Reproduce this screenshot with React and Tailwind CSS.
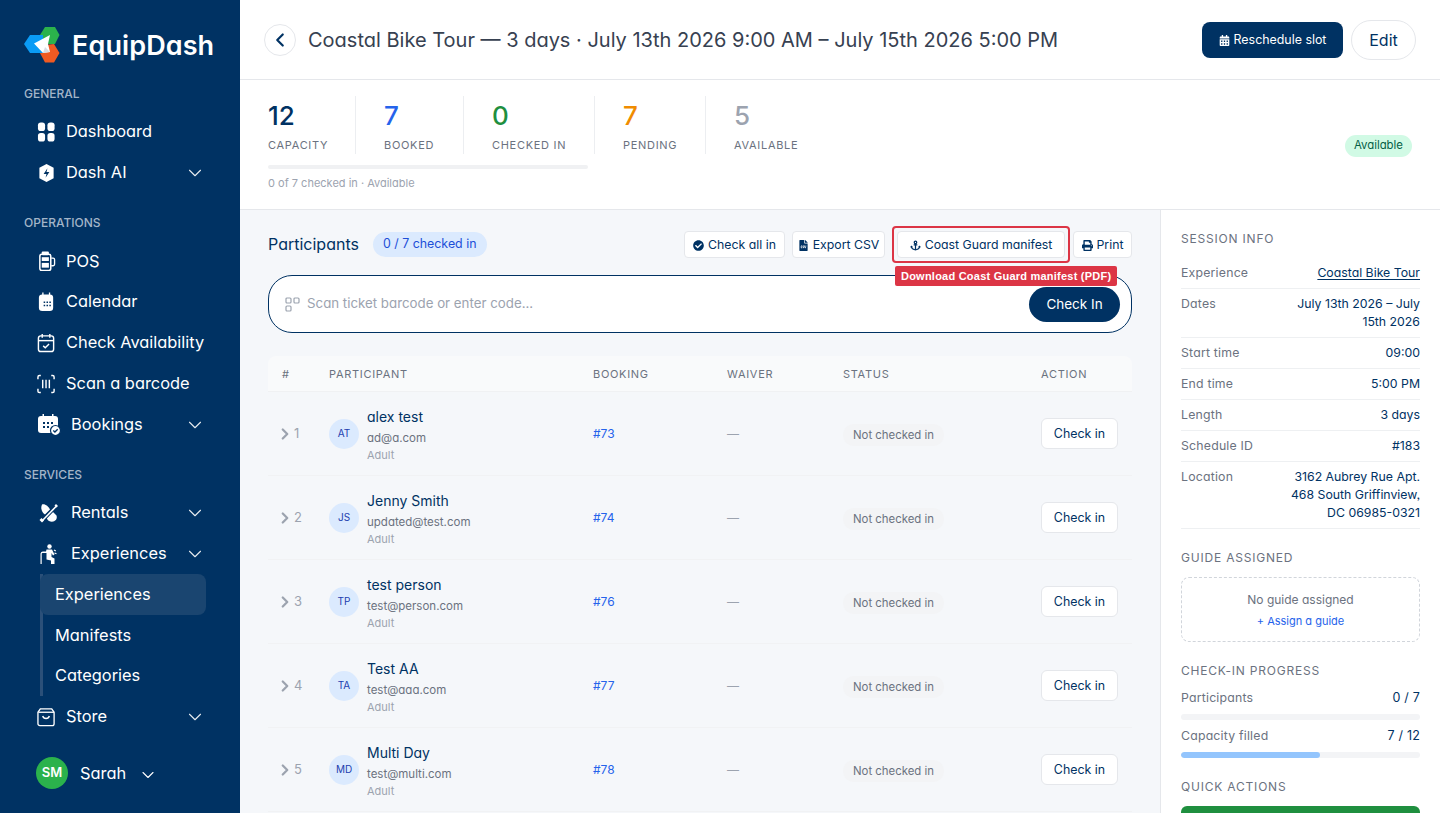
import React from "react";
import { ChevronDown, ChevronRight, ChevronLeft } from "lucide-react";
import { FaCheckCircle, FaFileCsv, FaAnchor, FaPrint, FaCalendarAlt } from "react-icons/fa";

const F = "[font-family:Inter,'Liberation_Sans',sans-serif] [font-feature-settings:'cv11','ss03']";

function Logo() {
  return (
    <svg width="38" height="36" viewBox="0 0 38 36">
      <path d="M16 8 L21 0 L31 0 L35.500 8 L31 17 L21 17 Z" fill="#2bb24c" />
      <path d="M16 26 L21 18 L30 17 L35.500 26 L30 35.500 L21 35.500 Z" fill="#f05a22" />
      <path d="M0 17 L6 8 L19 8 L19 26 L6 26 Z" fill="#0a9bf5" />
      <path d="M10 16.500 L26 8 L24 17 L26 25 L19 26 Z" fill="#fff" />
      <path d="M21 20 L26 25 L19 26 Z" fill="#d7dde3" />
    </svg>
  );
}
const I = ({ children, w = 20, h = 20 }) => (
  <svg width={w} height={h} viewBox="0 0 20 20" fill="white">{children}</svg>
);
const icons = {
  dashboard: <I><rect x="1" y="0" width="7.5" height="9" rx="3" /><rect x="11" y="0" width="7.5" height="9" rx="3" /><rect x="1" y="11" width="7.5" height="9" rx="3" /><rect x="11" y="11" width="7.5" height="9" rx="3" /></I>,
  ai: <I><path d="M10 0.5 L17.5 4.5 V15.5 L10 19.5 L2.5 15.5 V4.500 Z" /><path d="M11 5 L7 11 H10 L9 15 L13 9 H10 Z" fill="#003263" /></I>,
  pos: <I><rect x="3" y="3" width="11.500" height="17" rx="2" fill="none" stroke="white" strokeWidth="1.6" /><rect x="5" y="0" width="7.500" height="4" rx="1" /><rect x="5" y="6" width="7.500" height="4" /><rect x="5" y="12" width="7.500" height="5" /><path d="M15 7 h2 a1.5 1.5 0 0 1 1.5 1.5 v5 a1.5 1.5 0 0 1 -1.5 1.5 h-2" fill="none" stroke="white" strokeWidth="1.4" /></I>,
  calendar: <I><rect x="2" y="2" width="15" height="17.5" rx="3.5" /><rect x="5.5" y="0" width="1.4" height="4" /><rect x="12.5" y="0" width="1.4" height="4" /><path d="M7 9.5h1.6v1.6H7zM10 9.5h1.6v1.6H10zM13 9.5h1.6v1.6H13zM7 13h1.6v1.6H7zM10 13h1.6v1.6H10zM13 13h1.6v1.6H13z" fill="#003263" /></I>,
  check: <I><rect x="1.5" y="2.5" width="16" height="16.5" rx="2.5" fill="none" stroke="white" strokeWidth="1.5" /><path d="M1.5 7.5h16" stroke="white" strokeWidth="1.5" /><path d="M5.5 0.5v4M13.5 0.5v4" stroke="white" strokeWidth="1.5" /><path d="M6.5 13l2.2 2 4-4" fill="none" stroke="white" strokeWidth="1.5" /></I>,
  scan: <I><path d="M1 5V2.500A1.500 1.500 0 0 1 2.500 1H4M15 1h1.500A1.500 1.500 0 0 1 18 2.500V5M1 15v2.500A1.500 1.500 0 0 0 2.500 19H4M15 19h1.500a1.500 1.500 0 0 0 1.500-1.500V15M6 5.500v9M9.500 5.500v9M13 5.500v9" fill="none" stroke="white" strokeWidth="1.5" /></I>,
  bookings: (
    <svg width="24" height="22" viewBox="0 0 24 22" fill="white">
      <rect x="1" y="2" width="20" height="17" rx="3" />
      <rect x="5.5" y="0" width="1.5" height="4" /><rect x="15" y="0" width="1.5" height="4" />
      <path d="M6 8h2v2H6zM10 8h2v2h-2zM14 8h2v2h-2zM6 12h2v2H6zM10 12h2v2h-2z" fill="#003263" />
      <circle cx="18.5" cy="16.5" r="5" stroke="#003263" strokeWidth="1.2" />
      <path d="M16.3 16.5l1.6 1.5 2.8-2.800" fill="none" stroke="#003263" strokeWidth="1.3" />
    </svg>
  ),
  rentals: <I><path d="M3 1.500 C6 0.500 9.500 3.500 11 6.500 L6 11.500 C3.500 10 1 6 3 1.500 Z" /><path d="M12.500 7.500 L17.500 12.500 C19 17 14.500 20 10 18 C8.500 17 7.500 15.500 7 13 Z" /><path d="M3 18 L17.500 3" stroke="#003263" strokeWidth="3.500" /><path d="M3 18 L17.500 3" stroke="white" strokeWidth="1.600" /><path d="M15.500 2.500 L17 1 L19 3 L17.500 4.500 Z" /><path d="M0.500 17 L2.500 15 L5 17.500 L3 19.500 Z" /></I>,
  exp: <I><circle cx="10.500" cy="2.500" r="2.200" /><path d="M7.500 5.500h5.500l2.500 5-1.500 1-1.500-2.500V13l3 1.500V20h-3.500v-3.500l-4.500-1V9H3.500a1 1 0 0 0-.8 1V20H1.500V9.500A2.500 2.500 0 0 1 4 7.500h3z" /><path d="M15 6l1.800 1M15.500 9l2 .8" stroke="white" strokeWidth="1.200" /></I>,
  store: <I><path d="M3.500 1.500h12l2.500 3.500V17a2 2 0 0 1-2 2H3a2 2 0 0 1-2-2V5z" fill="none" stroke="white" strokeWidth="1.400" /><path d="M1.500 5h16.500" stroke="white" strokeWidth="1.400" /><path d="M6 9c1 3.500 6 3.500 7 0" fill="none" stroke="white" strokeWidth="1.500" /></I>,
};

function NavItem({ icon, label, chev, h = "h-[41px]", gap = "gap-[10px]", iw = "w-[19px]" }) {
  return (
    <div className={`${h} flex items-center pl-[37px] pr-[34px] ${gap} text-[16.4px] font-normal text-white`}>
      <span className={`${iw} flex justify-center shrink-0`}>{icon}</span>
      <span className="flex-1 whitespace-nowrap">{label}</span>
      {chev && <ChevronDown size={22} strokeWidth={1.2} className="text-white/90" />}
    </div>
  );
}
const SecLabel = ({ children }) => (
  <div className="pl-[24px] text-[12px] font-medium text-[#a3b5c8] h-[20px] flex items-center">{children}</div>
);

function Sidebar() {
  return (
    <aside className="w-[240px] shrink-0 h-full bg-[#003263] flex flex-col">
      <div className="h-[84px] pl-[24px] pt-[27px] flex items-start gap-[10px]">
        <Logo />
        <span className="mt-[1px] text-[27px] leading-[36px] font-semibold text-white tracking-[0.1px]">EquipDash</span>
      </div>
      <SecLabel>GENERAL</SecLabel>
      <div className="h-[7px]" />
      <NavItem icon={icons.dashboard} label="Dashboard" />
      <NavItem icon={icons.ai} label="Dash AI" chev />
      <div className="h-[20px]" />
      <SecLabel>OPERATIONS</SecLabel>
      <div className="h-[8px]" />
      <NavItem icon={icons.pos} label="POS" h="h-[40px]" />
      <NavItem icon={icons.calendar} label="Calendar" />
      <NavItem icon={icons.check} label="Check Availability" />
      <NavItem icon={icons.scan} label="Scan a barcode" />
      <NavItem icon={icons.bookings} label="Bookings" chev iw="w-[24px]" />
      <div className="h-[20px]" />
      <SecLabel>SERVICES</SecLabel>
      <div className="h-[7px]" />
      <NavItem icon={icons.rentals} label="Rentals" chev iw="w-[24px]" />
      <NavItem icon={icons.exp} label="Experiences" chev iw="w-[24px]" />
      <div className="ml-[40px] w-[166px] flex flex-col border-l-[3px] border-[#2b5079]">
        <div className="h-[41px] -ml-[3px] pl-[15px] flex items-center bg-[#1a4570] rounded-[8px] text-white text-[16.4px]">Experiences</div>
        <div className="h-[41px] pl-[12px] flex items-center text-white text-[16.4px]">Manifests</div>
        <div className="h-[40px] pb-[2px] pl-[12px] flex items-center text-white text-[16.4px]">Categories</div>
      </div>
      <NavItem icon={icons.store} label="Store" chev />
      <div className="mt-[20px] pl-[36px] flex items-center gap-[12px] text-white text-[16.4px]">
        <span className="w-[32px] h-[32px] rounded-full bg-[#2bb24c] flex items-center justify-center text-[13px] font-semibold">SM</span>
        <span>Sarah</span>
        <ChevronDown size={20} strokeWidth={1.3} className="mt-[3px]" />
      </div>
    </aside>
  );
}

function Header() {
  return (
    <header className="h-[80px] shrink-0 bg-white border-b border-[#e5e7eb] flex items-center pl-[24px] pr-[24px]">
      <span className="w-[32px] h-[32px] rounded-full border border-[#e5e7eb] flex items-center justify-center text-[#003263]">
        <ChevronLeft size={22} strokeWidth={2.4} />
      </span>
      <h1 className="ml-[12px] text-[20px] font-normal text-[#374151] whitespace-nowrap">Coastal Bike Tour — 3 days · July 13th 2026 9:00 AM – July 15th 2026 5:00 PM</h1>
      <div className="ml-auto flex items-center gap-[8px]">
        <button className="h-[36px] w-[141px] pt-[2px] rounded-[8px] bg-[#003263] text-white text-[12.4px] flex items-center justify-center gap-[4px]"><FaCalendarAlt size={11} />Reschedule slot</button>
        <button className="h-[40px] w-[65px] rounded-full border border-[#e5e7eb] bg-white text-[#003263] text-[16px]">Edit</button>
      </div>
    </header>
  );
}

function Stat({ n, label, color, w, pl }) {
  return (
    <div className={`${w} ${pl} h-[58px] border-r border-[#eceef1] last:border-r-0 flex flex-col`}>
      <span className={`pt-[1px] text-[26px] leading-[38px] font-medium ${color}`}>{n}</span>
      <span className="mt-[2px] text-[11px] leading-[16px] tracking-[0.7px] text-[#6b7280] whitespace-nowrap">{label}</span>
    </div>
  );
}
function Stats() {
  return (
    <section className="h-[130px] shrink-0 bg-white border-b border-[#e5e7eb] pl-[28px] pr-[28px] pt-[16px] flex justify-between">
      <div>
        <div className="flex">
          <Stat n="12" label="CAPACITY" color="text-[#003263]" w="w-[88px]" />
          <Stat n="7" label="BOOKED" color="text-[#2563eb]" w="w-[108px]" pl="pl-[28px]" />
          <Stat n="0" label="CHECKED IN" color="text-[#1f8f3f]" w="w-[131px]" pl="pl-[28px]" />
          <Stat n="7" label="PENDING" color="text-[#f08c00]" w="w-[111px]" pl="pl-[28px]" />
          <Stat n="5" label="AVAILABLE" color="text-[#9ca3af]" w="w-[120px]" pl="pl-[28px]" />
        </div>
        <div className="mt-[11px] w-[320px] h-[4px] rounded-full bg-[#f0f1f3]" />
        <div className="mt-[7px] text-[11px] leading-[14px] text-[#9ca3af]">0 of 7 checked in · Available</div>
      </div>
      <div className="self-start mt-[35px]"><span className="inline-flex items-center h-[22px] px-[9px] rounded-full bg-[#d1fae5] text-[#065f46] text-[11.4px]">Available</span></div>
    </section>
  );
}

function ToolBtn({ icon, children, w }) {
  return (
    <button className={`h-[27px] ${w} pt-[1px] rounded-[4px] border border-[#e5e7eb] bg-white text-[#003263] text-[12.300px] flex items-center justify-center gap-[4px] whitespace-nowrap`}>{icon}{children}</button>
  );
}

const rows = [
  ["1", "AT", "alex test", "ad@a.com", "#73"],
  ["2", "JS", "Jenny Smith", "updated@test.com", "#74"],
  ["3", "TP", "test person", "test@person.com", "#76"],
  ["4", "TA", "Test AA", "test@aaa.com", "#77"],
  ["5", "MD", "Multi Day", "test@multi.com", "#78"],
];
const th = "text-[11px] tracking-[0.7px] text-[#6b7280]";
const cols = "grid grid-cols-[47px_264px_134px_116px_198px_1fr] items-center pl-[14px]";
function Table() {
  return (
    <div className="mt-[23px]">
      <div className={`h-[36px] ${cols} pt-[1px] bg-[#f9fafb] border-b border-[#f0f1f3] rounded-t-[8px]`}>
        <span className={th}>#</span><span className={th}>PARTICIPANT</span><span className={th}>BOOKING</span><span className={th}>WAIVER</span><span className={th}>STATUS</span><span className={th}>ACTION</span>
      </div>
      {rows.map((r) => (
        <div key={r[0]} className={`h-[84px] ${cols} border-b border-[#f1f2f4]`}>
          <span className="flex items-center text-[#9ca3af] text-[13px]"><ChevronRight size={18} strokeWidth={3} className="-ml-[6px]" />{r[0]}</span>
          <div className="flex items-center gap-[8px]">
            <span className="w-[30px] h-[30px] rounded-full bg-[#dbeafe] text-[#1e40af] text-[10px] flex items-center justify-center">{r[1]}</span>
            <div className="flex flex-col pt-[4px]">
              <span className="text-[14px] leading-[18px] text-[#003263]">{r[2]}</span>
              <span className="mt-[4px] text-[11.5px] leading-[16px] text-[#6b7280]">{r[3]}</span>
              <span className="mt-[1px] text-[11px] leading-[16px] text-[#9ca3af]">Adult</span>
            </div>
          </div>
          <span className="text-[12px] text-[#2563eb]">{r[4]}</span>
          <span className="text-[12px] text-[#9ca3af]">—</span>
          <span><span className="inline-flex items-center h-[22px] px-[10px] rounded-full bg-[#f3f4f6] text-[#6b7280] text-[11.400px]">Not checked in</span></span>
          <button className="w-[77px] h-[31px] pt-[1px] rounded-[6px] border border-[#e5e7eb] bg-white text-[#003263] text-[12.400px]">Check in</button>
        </div>
      ))}
    </div>
  );
}

function Participants() {
  return (
    <main className="flex-1 min-w-0 pl-[28px] pr-[28px] pt-[21px] bg-[#f5f7fa] overflow-hidden">
      <div className="flex items-center h-[27px]">
        <span className="text-[16px] leading-[22px] pb-[2px] text-[#003263]">Participants</span>
        <span className="ml-[14px] inline-flex items-center h-[25px] px-[10px] rounded-full bg-[#dbeafe] text-[#1d4ed8] text-[12.400px]">0 / 7 checked in</span>
        <div className="ml-auto flex items-center gap-[7px]">
          <ToolBtn w="w-[101px]" icon={<FaCheckCircle size={11} />}>Check all in</ToolBtn>
          <ToolBtn w="w-[93px]" icon={<FaFileCsv size={11} />}>Export CSV</ToolBtn>
          <span className="relative -mr-[4px] rounded-[4px] border-[2px] border-[#dc3545] p-[3px]">
            <ToolBtn w="w-[168px]" icon={<FaAnchor size={11} />}>Coast Guard manifest</ToolBtn>
            <span className="absolute left-[1px] top-[38px] z-10 h-[20px] px-[6px] flex items-center bg-[#dc3545] rounded-[2px] text-white text-[11px] tracking-[0.23px] font-bold whitespace-nowrap [font-family:'Liberation_Sans',sans-serif]">Download Coast Guard manifest (PDF)</span>
          </span>
          <ToolBtn w="w-[59px]" icon={<FaPrint size={11} />}>Print</ToolBtn>
        </div>
      </div>
      <div className="mt-[17px] h-[58px] rounded-[24px] border-[1.5px] border-[#003263] bg-white flex items-center pl-[16px] pr-[11px]">
        <svg width="15" height="15" viewBox="0 0 15 15" fill="none" stroke="#9ca3af" strokeWidth="1.2"><rect x="1" y="1" width="5" height="5" rx="1" /><rect x="9" y="1" width="5" height="5" rx="1" /><rect x="1" y="9" width="5" height="5" rx="1" /></svg>
        <span className="ml-[7px] flex-1 text-[13.300px] text-[#9ca3af]">Scan ticket barcode or enter code...</span>
        <button className="w-[91px] h-[35px] rounded-full bg-[#003263] text-white text-[13.500px]">Check In</button>
      </div>
      <Table />
    </main>
  );
}

const Row = ({ k, v }) => (
  <div className="flex justify-between gap-[16px] border-b border-[#eef0f2] py-[6px] leading-[18px]">
    <span className="text-[#6b7280] text-[12.300px] tracking-[0.2px] whitespace-nowrap">{k}</span>
    <span className="text-[#003263] text-[12.300px] text-right">{v}</span>
  </div>
);
const PanelTitle = ({ children, cls = "" }) => (
  <div className={`text-[12px] leading-[16px] tracking-[0.8px] text-[#6b7280] ${cls}`}>{children}</div>
);
const Bar = ({ k, v, pct }) => (
  <div className="mb-[7px]">
    <div className="flex justify-between text-[12.300px] tracking-[0.2px] leading-[18px]">
      <span className="text-[#6b7280]">{k}</span><span className="text-[#003263] text-[12.500px]">{v}</span>
    </div>
    <div className="mt-[7px] h-[6px] rounded-full bg-[#f3f4f6] overflow-hidden">
      <div className="h-full rounded-full bg-[#93c5fd]" style={{ width: pct }} />
    </div>
  </div>
);
function Panel() {
  return (
    <aside className="w-[280px] shrink-0 h-full bg-white border-l border-[#e5e7eb] pl-[20px] pr-[20px] pt-[21px] overflow-hidden">
      <PanelTitle>SESSION INFO</PanelTitle>
      <div className="mt-[11px]">
        <Row k="Experience" v={<span className="underline decoration-[#003263] underline-offset-2">Coastal Bike Tour</span>} />
        <Row k="Dates" v={<>July 13th 2026 – July<br />15th 2026</>} />
        <Row k="Start time" v="09:00" />
        <Row k="End time" v="5:00 PM" />
        <Row k="Length" v="3 days" />
        <Row k="Schedule ID" v="#183" />
        <Row k="Location" v={<>3162 Aubrey Rue Apt.<br />468 South Griffinview,<br />DC 06985-0321</>} />
      </div>
      <PanelTitle cls="mt-[21px]">GUIDE ASSIGNED</PanelTitle>
      <div className="mt-[11px] h-[65px] rounded-[8px] border border-dashed border-[#d1d5db] flex flex-col items-center justify-center">
        <span className="text-[12px] leading-[18px] text-[#6b7280]">No guide assigned</span>
        <span className="mt-[4px] text-[11px] leading-[16px] text-[#2563eb]">+ Assign a guide</span>
      </div>
      <PanelTitle cls="mt-[21px]">CHECK-IN PROGRESS</PanelTitle>
      <div className="mt-[10px]">
        <Bar k="Participants" v="0 / 7" pct="0%" />
        <Bar k="Capacity filled" v="7 / 12" pct="58%" />
      </div>
      <PanelTitle cls="mt-[21px]">QUICK ACTIONS</PanelTitle>
      <div className="mt-[11px] h-[40px] rounded-[6px] bg-[#1f8f3f]" />
    </aside>
  );
}

export default function App() {
  return (
    <div className={`w-[1440px] h-[813px] overflow-hidden flex ${F}`}>
      <Sidebar />
      <div className="flex-1 min-w-0 h-full flex flex-col">
        <Header />
        <Stats />
        <div className="flex-1 min-h-0 flex">
          <Participants />
          <Panel />
        </div>
      </div>
    </div>
  );
}
